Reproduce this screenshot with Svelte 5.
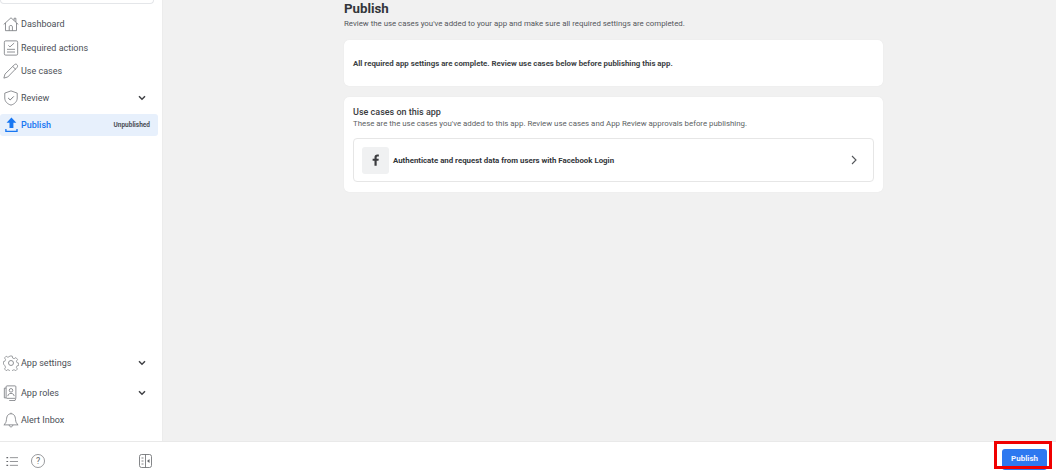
<script>
  const topItems = [
    { label: "Dashboard", icon: "home", h: 24 },
    { label: "Required actions", icon: "list", h: 23 },
    { label: "Use cases", icon: "pencil", h: 24 },
    { label: "Review", icon: "shield", h: 30, more: true }
  ];
  const bottomItems = [
    { label: "App settings", icon: "gear", h: 30, more: true },
    { label: "App roles", icon: "roles", h: 30, more: true },
    { label: "Alert Inbox", icon: "bell", h: 24 }
  ];
</script>

{#snippet icon(name)}
  <svg class="icon" viewBox="0 0 18 18" fill="none" stroke="#73767b" stroke-width="0.9">
    {#if name === "home"}
      <path d="M.8 9.500 9 2l8.200 7.500M2.800 7.800V16.500h12.400V7.800M7 16.500v-4.500c0-1.800 3.600-1.800 3.600 0v4.500M12.500 5V2.500h2V6.800" />
    {:else if name === "list"}
      <rect x="1.500" y="1" width="15" height="16" rx="1.500" />
      <path d="M6 6l1.800 1.800L12.500 3.500M4.500 10.500h9M4.500 13.500h9" />
    {:else if name === "pencil"}
      <path d="M1 17l1.200-4.500L12.800 2c1-1 2.200-1 3 0 .8.800.8 2 0 3L5.400 15.700z M11 4l3.500 3.300" />
    {:else if name === "shield"}
      <path d="M9 1l7 2.500V9c0 4-3 6.800-7 8-4-1.200-7-4-7-8V3.500z" />
      <path d="M5.800 9l2.300 2.200 4-4" stroke-width="1.100" />
    {:else if name === "gear"}
      <path d="M7.500 1h3l.5 2.400 1.800.8 2.100-1.300 2 2.200-1.400 2 .7 1.900 2 .5v2.800l-2 .5-.7 1.800 1.200 2-2 2-2-1.200-1.800.7-.4 2H7.600l-.5-2-1.800-.8-2 1.300-2-2.100 1.200-2-.7-1.800L0 10.600V7.700l1.800-.5.7-1.900-1.200-2 2-2.100 2 1.300 1.800-.8z" transform="translate(.5 .2) scale(.94)" stroke-width="0.800" />
      <circle cx="9" cy="9" r="2.800" />
    {:else if name === "roles"}
      <rect x="3.500" y="1" width="11" height="14" rx="1" />
      <circle cx="9" cy="6" r="2" />
      <path d="M5.500 12.500c0-2 1.500-3 3.500-3s3.500 1 3.500 3M3.500 3.500H1.500v11h2M14.500 15l-1 2.500H7" />
    {:else if name === "bell"}
      <path d="M1 14.500c1.800-1.500 2.600-3 2.900-6C4.200 4 6 2 9 2s4.800 2 5.100 6.500c.3 3 1.100 4.500 2.900 6zM7 14.500c0 3 4 3 4 0M9 2V.8" />
    {/if}
  </svg>
{/snippet}

{#snippet chevron()}
  <svg class="chev" viewBox="0 0 8 6" fill="none" stroke="#3f4145" stroke-width="1.500"><path d="M1 1.200l3 3 3-3" /></svg>
{/snippet}

{#snippet row(item)}
  <div class="row" style="height: {item.h}px">
    {@render icon(item.icon)}
    <span class="label">{item.label}</span>
    {#if item.more}{@render chevron()}{/if}
  </div>
{/snippet}

<div class="page">
  <aside class="side">
    <div class="nav">
      <div class="search"></div>
      <div class="group">
        {#each topItems as item}
          {@render row(item)}
        {/each}
        <div class="row active">
          <svg class="icon" viewBox="0 0 18 18" fill="#1877f2">
            <path d="M9.500 0.500l5.500 6h-3.300v6H7.300v-6H4zM2.500 13.500h1.500v2h11v-2h1.500v3.500h-14z" />
          </svg>
          <span class="label">Publish</span>
          <span class="status">Unpublished</span>
        </div>
      </div>
      <div class="group low">
        {#each bottomItems as item}
          {@render row(item)}
        {/each}
      </div>
    </div>
    <div class="side-foot">
      <svg class="foot-list" viewBox="0 0 14 12" fill="none" stroke="#65676b">
        <path d="M4.500 1.500H14M4.500 6H14M4.500 10.500H14" stroke-width="0.800" />
        <path d="M0.500 1.500h2M0.500 6h2M0.500 10.500h2" stroke-width="1.400" />
      </svg>
      <svg class="foot-help" viewBox="0 0 15 15" fill="none" stroke="#65676b" stroke-width="0.700">
        <circle cx="7.500" cy="7.500" r="7" />
        <text x="7.500" y="11" text-anchor="middle" font-size="9.500" fill="#65676b" stroke="none" font-family="Roboto, sans-serif">?</text>
      </svg>
      <svg class="foot-panel" viewBox="0 0 13 14" fill="none" stroke="#65676b" stroke-width="0.800">
        <rect x="0.500" y="0.500" width="12" height="13" rx="2" />
        <path d="M6.500 0.500v13M2.500 4h2M2.500 7h2M2.500 10h2" />
        <path d="M10.500 5v4L8 7z" fill="#65676b" stroke="none" />
      </svg>
    </div>
  </aside>

  <div class="main">
    <main class="content">
      <div class="column">
        <h1>Publish</h1>
        <p class="sub">Review the use cases you've added to your app and make sure all required settings are completed.</p>

        <section class="card notice">
          <strong>All required app settings are complete. Review use cases below before publishing this app.</strong>
        </section>

        <section class="card cases">
          <h2>Use cases on this app</h2>
          <p class="hint">These are the use cases you've added to this app. Review use cases and App Review approvals before publishing.</p>
          <div class="case">
            <div class="fb">
              <svg viewBox="0 0 9 15" width="7" height="12" fill="#3a3b3e">
                <path d="M6 15V8.500h2.300l.4-2.700H6V4.200c0-.8.300-1.300 1.400-1.300h1.400V.500C8.500.400 7.700.300 6.800.300 4.700.300 3.200 1.600 3.200 3.900v1.900H.8v2.700h2.400V15z" />
              </svg>
            </div>
            <strong>Authenticate and request data from users with Facebook Login</strong>
            <svg class="go" viewBox="0 0 6 10" fill="none" stroke="#53565a" stroke-width="1.100"><path d="M1 1l4 4-4 4" /></svg>
          </div>
        </section>
      </div>
    </main>
    <footer class="bar">
      <button class="publish">Publish</button>
      <div class="mark"></div>
    </footer>
  </div>
</div>

<style>
  :global(body) {
    margin: 0;
    font-family: Roboto, "Liberation Sans", sans-serif;
    color: #1c1e21;
  }

  .page {
    display: flex;
    width: 1056px;
    height: 470px;
    overflow: hidden;
    background: #f1f1f1;
  }

  .side {
    display: flex;
    flex-direction: column;
    flex: none;
    width: 163px;
    background: #fff;
  }

  .nav {
    display: flex;
    flex-direction: column;
    flex: 1;
    padding: 0 4px 0 0;
    border-right: 1px solid #ececec;
  }

  .search {
    height: 3px;
    margin: 0 4px 0 0;
    border: 1px solid #e4e6e9;
    border-top: none;
    border-radius: 0 0 4px 4px;
  }

  .group {
    display: flex;
    flex-direction: column;
    padding-top: 8px;
  }

  .low {
    margin-top: auto;
    padding: 0 0 9px;
  }

  .row {
    display: flex;
    align-items: center;
    gap: 2px;
    padding-left: 3px;
    padding-right: 12px;
    font-size: 9px;
    color: #4b4f56;
  }

  .icon {
    flex: none;
    width: 16px;
    height: 16px;
  }

  .label {
    flex: 1;
  }

  .chev {
    width: 8px;
    height: 6px;
  }

  .active {
    height: 22px;
    margin-top: 1px;
    background: #e7f0fc;
    border-radius: 3px;
    padding-right: 8px;
    color: #1877f2;
    font-weight: 500;
  }

  .status {
    font-size: 6.500px;
    font-weight: 700;
    color: #4b4f56;
  }

  .side-foot {
    display: flex;
    align-items: center;
    height: 29px;
    padding: 10px 0 0 6px;
    box-sizing: border-box;
    border-top: 1px solid #e9e9e9;
  }

  .foot-list {
    width: 12px;
    height: 11px;
  }

  .foot-help {
    width: 14px;
    height: 14px;
    margin-left: 13px;
  }

  .foot-panel {
    width: 13px;
    height: 14px;
    margin-left: 94px;
  }

  .main {
    display: flex;
    flex-direction: column;
    flex: 1;
    min-width: 0;
  }

  .content {
    flex: 1;
    min-height: 0;
    padding-left: 181px;
  }

  .column {
    width: 539px;
  }

  h1 {
    margin: 0;
    padding-top: 1px;
    font-size: 13.300px;
    line-height: 15px;
    font-weight: 700;
    color: #33363a;
  }

  .sub {
    margin: 2px 0 0;
    font-size: 7.850px;
    line-height: 11px;
    color: #54575c;
  }

  .card {
    margin-top: 11px;
    background: #fff;
    border-radius: 5px;
    box-shadow: 0 0 1px #dcdcdc;
    font-size: 7.850px;
  }

  .notice {
    display: flex;
    align-items: center;
    height: 46px;
    padding-left: 9px;
    color: #3c3f44;
  }

  .cases {
    height: 95px;
    padding: 10px 9px 0;
    box-sizing: border-box;
  }

  h2 {
    margin: 0;
    font-size: 9px;
    line-height: 11px;
    font-weight: 500;
    color: #3a3c40;
  }

  .hint {
    margin: 0;
    padding-top: 1px;
    line-height: 10px;
    color: #5c5f64;
  }

  .case {
    display: flex;
    align-items: center;
    gap: 4px;
    height: 44px;
    margin-top: 9px;
    padding: 0 16px 0 8px;
    box-sizing: border-box;
    border: 1px solid #e6e6e6;
    border-radius: 4px;
    color: #33363a;
  }

  .fb {
    display: flex;
    align-items: center;
    justify-content: center;
    width: 27px;
    height: 27px;
    background: #f0f1f2;
    border-radius: 3px;
  }

  .go {
    width: 6px;
    height: 10px;
    margin-left: auto;
  }

  .bar {
    position: relative;
    display: flex;
    align-items: flex-start;
    justify-content: flex-end;
    height: 29px;
    padding-right: 9px;
    box-sizing: border-box;
    background: #fff;
    border-top: 1px solid #e9e9e9;
  }

  .publish {
    width: 45px;
    height: 21px;
    margin-top: 7px;
    padding: 0 0 3px;
    border: none;
    border-radius: 3px;
    background: #2d78f0;
    color: #f0f4ff;
    font: 700 8px Roboto, sans-serif;
  }

  .mark {
    position: absolute;
    left: 831px;
    top: -1px;
    width: 52px;
    height: 22px;
    border: 3px solid #f00000;
    pointer-events: none;
  }
</style>
